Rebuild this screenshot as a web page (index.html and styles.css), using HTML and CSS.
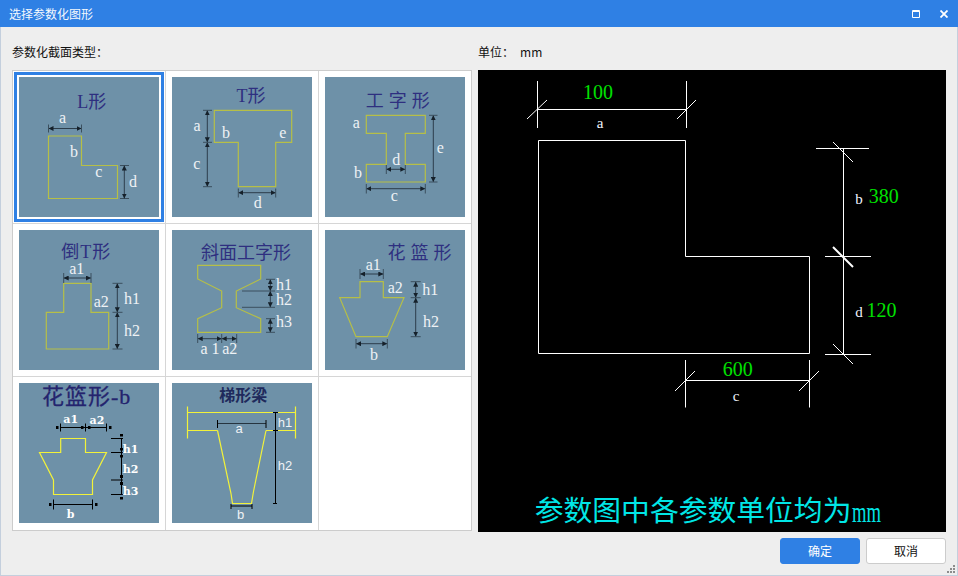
FILE: index.html
```html
<!DOCTYPE html>
<html lang="zh-CN">
<head>
<meta charset="utf-8">
<title>选择参数化图形</title>
<link rel="stylesheet" href="styles.css">
</head>
<body>
<div class="window">
  <header class="titlebar">
    <span class="title">选择参数化图形</span>
    <div class="win-btns">
      <svg class="win-icon" viewBox="0 0 8 8"><path class="ic" d="M.5 1.5h7v6h-7zM.5 .5h7v1h-7z"/></svg>
      <svg class="win-icon" viewBox="0 0 8 8"><path class="ic2" d="M.5 .5l7 7M7.5 .5l-7 7"/></svg>
    </div>
  </header>
  <main class="main">
    <div class="columns">
      <section class="col-left">
        <div class="col-label">参数化截面类型：</div>
        <div class="grid">
          <div class="cell selected">
            <svg class="thumb" viewBox="0 0 140 140">
              <defs>
                <marker id="ah" viewBox="0 0 6 6" refX="6" refY="3" markerWidth="5" markerHeight="5" markerUnits="userSpaceOnUse" orient="auto-start-reverse"><path class="head" d="M0 0L6 3L0 6Z"/></marker>
                <marker id="sq" viewBox="0 0 6 6" refX="-4" refY="3" markerWidth="3" markerHeight="3" markerUnits="userSpaceOnUse" orient="auto-start-reverse"><path class="head-k" d="M0 0H6V6H0Z"/></marker>
              </defs>
              <text class="ttl" x="72.7" y="31">L形</text>
              <path class="shape" d="M29.5 59H62.5V88.5H98.5V121.5H29.5Z"/>
              <line class="dim" x1="29.5" y1="51.5" x2="62.5" y2="51.5"/>
              <path class="tick" d="M29.5 47.5V55.5M62.5 47.5V55.5M101 88.5H110M101 121.5H110"/>
              <line class="dim" x1="105.3" y1="88.5" x2="105.3" y2="121.5"/>
              <text class="lbl" x="43.5" y="46">a</text>
              <text class="lbl" x="55" y="80">b</text>
              <text class="lbl" x="79.7" y="99.7">c</text>
              <text class="lbl" x="114" y="109.7">d</text>
            </svg>
          </div>
          <div class="cell">
            <svg class="thumb" viewBox="0 0 140 140">
              <text class="ttl" x="79" y="25">T形</text>
              <path class="shape" d="M42.3 33.3H119.7V65.3H103.7V109.7H66.3V65.3H42.3Z"/>
              <line class="dim" x1="35.3" y1="33.3" x2="35.3" y2="65.3"/>
              <line class="dim" x1="35.3" y1="65.3" x2="35.3" y2="109.7"/>
              <line class="dim" x1="66.3" y1="115.7" x2="103.7" y2="115.7"/>
              <path class="tick" d="M31 33.3H40M31 65.3H40M31 109.7H40M66.3 111.5V120.5M103.7 111.5V120.5"/>
              <text class="lbl" x="25" y="53.7">a</text>
              <text class="lbl" x="24.7" y="91.7">c</text>
              <text class="lbl" x="54" y="61.3">b</text>
              <text class="lbl" x="110.7" y="61.3">e</text>
              <text class="lbl" x="85.7" y="131.3">d</text>
            </svg>
          </div>
          <div class="cell">
            <svg class="thumb" viewBox="0 0 140 140">
              <text class="ttl ttl-wide" x="75.2" y="30.3">工字形</text>
              <path class="shape" d="M41.3 38.3H100.3V56.3H80.3V87.3H100.3V105H41.3V87.3H61.3V56.3H41.3Z"/>
              <line class="dim" x1="108.3" y1="38.3" x2="108.3" y2="105"/>
              <line class="dim" x1="61.3" y1="92.3" x2="80.3" y2="92.3"/>
              <line class="dim" x1="41.3" y1="111.7" x2="100.3" y2="111.7"/>
              <path class="tick" d="M104 38.3H112.5M104 105H112.5M61.3 88V97M80.3 88V97M41.3 107V116.5M100.3 107V116.5"/>
              <text class="lbl" x="31.3" y="50.7">a</text>
              <text class="lbl" x="33" y="101.3">b</text>
              <text class="lbl" x="71.3" y="88">d</text>
              <text class="lbl" x="115.3" y="75.7">e</text>
              <text class="lbl" x="69.3" y="124">c</text>
            </svg>
          </div>
          <div class="cell">
            <svg class="thumb" viewBox="0 0 140 140">
              <text class="ttl ttl-tee" x="67.3" y="27.5">倒T形</text>
              <path class="shape" d="M44.7 53.3H72V82.3H89.7V119H27.3V82.3H44.7Z"/>
              <line class="dim" x1="44.7" y1="48" x2="72" y2="48"/>
              <line class="dim" x1="98.3" y1="53.3" x2="98.3" y2="82.3"/>
              <line class="dim" x1="98.3" y1="82.3" x2="98.3" y2="119"/>
              <path class="tick" d="M44.7 43V53M72 43V53M93.5 53.3H103.5M93.5 82.3H103.5M93.5 119H103.5"/>
              <text class="lbl" x="57.7" y="44">a1</text>
              <text class="lbl" x="82.3" y="77">a2</text>
              <text class="lbl" x="113" y="73.7">h1</text>
              <text class="lbl" x="113" y="106">h2</text>
            </svg>
          </div>
          <div class="cell">
            <svg class="thumb" viewBox="0 0 140 140">
              <text class="ttl" x="74" y="28.7">斜面工字形</text>
              <path class="shape" d="M25.7 35.3H88.7V49L64.3 61V77.7L88.7 88.7V102.3H25.7V88.7L49.7 77.7V61L25.7 49Z"/>
              <line class="dim" x1="98.3" y1="49.3" x2="98.3" y2="61"/>
              <line class="dim" x1="98.3" y1="61" x2="98.3" y2="77.3"/>
              <line class="dim" x1="98.3" y1="88.7" x2="98.3" y2="102.3"/>
              <line class="dim" x1="25.7" y1="108.7" x2="49.7" y2="108.7"/>
              <line class="dim" x1="49.7" y1="108.7" x2="64.7" y2="108.7"/>
              <path class="tick" d="M94 49.3H103M70 61H103M70 77.3H103M94 88.7H103M94 102.3H103M25.7 104V113M49.7 104V113M64.7 104V113"/>
              <text class="lbl" x="112" y="59.7">h1</text>
              <text class="lbl" x="112" y="75.3">h2</text>
              <text class="lbl" x="112" y="97.3">h3</text>
              <text class="lbl" x="38" y="123.7">a 1</text>
              <text class="lbl" x="57.7" y="123.7">a2</text>
            </svg>
          </div>
          <div class="cell">
            <svg class="thumb" viewBox="0 0 140 140">
              <text class="ttl ttl-wide" x="97" y="28.7">花篮形</text>
              <path class="shape" d="M35 51.7H58.3V67.7H79L62.3 106.7H31L14.7 67.7H35Z"/>
              <line class="dim" x1="35" y1="44" x2="58.3" y2="44"/>
              <line class="dim" x1="90.7" y1="51.7" x2="90.7" y2="67.7"/>
              <line class="dim" x1="90.7" y1="67.7" x2="90.7" y2="106.7"/>
              <line class="dim" x1="31" y1="113.7" x2="62.3" y2="113.7"/>
              <path class="tick" d="M35 39V49M58.3 39V49M85.7 51.7H95.7M85.7 67.7H95.7M85.7 106.7H95.7M31 109V118.5M62.3 109V118.5"/>
              <text class="lbl" x="48.3" y="40.3">a1</text>
              <text class="lbl" x="70.3" y="63.3">a2</text>
              <text class="lbl" x="105.3" y="65.3">h1</text>
              <text class="lbl" x="106" y="97.3">h2</text>
              <text class="lbl" x="49" y="129.7">b</text>
            </svg>
          </div>
          <div class="cell">
            <svg class="thumb" viewBox="0 0 140 140">
              <text class="ttl ttl-big" x="67.7" y="21.3">花篮形-b</text>
              <path class="shape-y" d="M41.7 55.5H66.5V69.5H87.5L73.5 97V111.5H34.5V97L20.5 69.5H41.7Z"/>
              <line class="dim-k" x1="41.5" y1="44.5" x2="66.5" y2="44.5"/>
              <line class="dim-k" x1="66.5" y1="44.5" x2="87.5" y2="44.5"/>
              <line class="dim-k" x1="102.5" y1="55.5" x2="102.5" y2="69.5"/>
              <line class="dim-k" x1="102.5" y1="69.5" x2="102.5" y2="97"/>
              <line class="dim-k" x1="102.5" y1="97" x2="102.5" y2="111.5"/>
              <line class="dim-k" x1="34.5" y1="121.5" x2="73.5" y2="121.5"/>
              <path class="tick-k" d="M41.5 40.5V48.5M66.5 40.5V48.5M87.5 40.5V48.5M92 55.5H104M92 69.5H104M92 97H104M92 111.5H104M34.5 116.5V126.5M73.5 116.5V126.5"/>
              <text class="lbl-b" x="51.7" y="39.7">a1</text>
              <text class="lbl-b" x="78" y="40.7">a2</text>
              <text class="lbl-b" x="111.7" y="69.7">h1</text>
              <text class="lbl-b" x="111.7" y="90">h2</text>
              <text class="lbl-b" x="111.7" y="112">h3</text>
              <text class="lbl-b" x="51.7" y="134.7">b</text>
            </svg>
          </div>
          <div class="cell">
            <svg class="thumb" viewBox="0 0 140 140">
              <text class="ttl ttl-bold" x="71.3" y="18">梯形梁</text>
              <path class="shape-y" d="M15.5 29.5H123.5M15.5 47.5H45.5M94 47.5H123.5M15.5 23.5V55.5M123.5 23.5V55.5M45.5 47.5L59 110.5L60.5 120.5H79.5L81.5 108.5L94 47.5"/>
              <line class="thin" x1="45.5" y1="40.5" x2="94" y2="40.5"/>
              <line class="thin-k" x1="103.5" y1="29.5" x2="103.5" y2="120.5"/>
              <path class="thin-k" d="M45.5 37V45M94 37V45M59 121V126M80 121V126M59 123H80M101 29.5H106M101 47.5H106M101 120.5H105"/>
              <text class="lbl-s" x="67" y="50.3">a</text>
              <text class="lbl-s" x="113" y="44.3">h1</text>
              <text class="lbl-s" x="113" y="87">h2</text>
              <text class="lbl-s" x="68.7" y="136">b</text>
            </svg>
          </div>
          <div class="cell"></div>
        </div>
      </section>
      <section class="col-right">
        <div class="col-label">单位：<span class="unit">mm</span></div>
        <div class="cad">
          <svg class="cad-svg" viewBox="0 0 468 462">
            <path class="cad-line" d="M60.5 70.5H207.5V186.5H331.5V283.5H60.5Z"/>
            <path class="cad-line" d="M59.5 11V58M208.5 11V58M59.5 39.5H208.5M49 49L69 30M199 49L218 30"/>
            <path class="cad-line" d="M338 78.5H391M347 186.5H393M347 284.5H393M365.5 78.5V284.5M355 72L375 92M355 274L375 294"/>
            <path class="cad-thick" d="M355 177L375 197"/>
            <path class="cad-line" d="M207.5 290V337.5M331.5 290V337.5M207.5 310.5H331.5M197 321L217 301M321 321L341 301"/>
            <text class="cad-num" x="120" y="29.3">100</text>
            <text class="cad-num" x="259.7" y="306">600</text>
            <text class="cad-num start" x="390.7" y="133">380</text>
            <text class="cad-num start" x="388.5" y="247">120</text>
            <text class="cad-par" x="122" y="58">a</text>
            <text class="cad-par" x="258" y="331">c</text>
            <text class="cad-par" x="381" y="133.5">b</text>
            <text class="cad-par" x="381" y="246.7">d</text>
            <text class="cad-note" x="56.7" y="451">参数图中各参数单位均为</text>
            <text class="cad-mm" x="374" y="452" textLength="29" lengthAdjust="spacingAndGlyphs">mm</text>
          </svg>
        </div>
      </section>
    </div>
    <footer class="footer">
      <button class="btn primary">确定</button>
      <button class="btn">取消</button>
    </footer>
    <svg class="grip" viewBox="0 0 9 9"><path class="grip-dots" d="M6 0h2v2H6zM3 3h2v2H3zM6 3h2v2H6zM0 6h2v2H0zM3 6h2v2H3zM6 6h2v2H6z"/></svg>
  </main>
</div>
</body>
</html>
```

FILE: styles.css
```css
*, *::before, *::after { box-sizing: border-box; }
html, body { margin: 0; padding: 0; }
body {
  width: 958px;
  height: 576px;
  overflow: hidden;
  font-family: "Noto Sans CJK SC", "Noto Sans", sans-serif;
  font-size: 12px;
  color: #111;
  background: #eee;
}
.window { width: 958px; height: 576px; display: flex; flex-direction: column; }
.titlebar {
  height: 27px;
  flex: none;
  background: #2f80e4;
  color: #fff;
  display: flex;
  align-items: center;
  justify-content: space-between;
  padding: 0 10px 0 9px;
}
.title { font-size: 12px; line-height: 18px; opacity: .95; }
.win-btns { display: flex; gap: 20px; align-items: center; }
.win-icon { width: 8px; height: 8px; display: block; }
.ic { fill: none; stroke: #fff; stroke-width: 1; }
.ic2 { fill: none; stroke: #fff; stroke-width: 1.8; }

.main {
  position: relative;
  flex: 1;
  border: 1px solid #c4cfdd;
  border-top: 0;
  padding: 0 11px;
  display: flex;
  flex-direction: column;
}
.columns { display: flex; gap: 6px; }
.col-left { width: 460px; flex: none; }
.col-right { width: 468px; flex: none; }
.col-label { height: 43px; padding-top: 16px; line-height: 18px; font-size: 12px; color: #111; }
.unit { margin-left: 6px; }

.grid {
  width: 460px;
  height: 461px;
  border: 1px solid #ccc;
  background: #fff;
  display: grid;
  grid-template-columns: 153px 153px 152px;
  grid-template-rows: 153px 153px 153px;
}
.cell {
  position: relative;
  padding: 6px 0 0 6px;
  border-right: 1px solid #d6d6d6;
  border-bottom: 1px solid #d6d6d6;
}
.cell:nth-child(3n) { border-right: 0; }
.cell:nth-child(n+7) { border-bottom: 0; }
.selected::after {
  content: "";
  position: absolute;
  left: 1px;
  top: 1px;
  width: 150px;
  height: 150px;
  border: 3px solid #2f80e4;
}
.thumb { display: block; width: 140px; height: 140px; background: #6e91a8; }

.ttl {
  font-family: "Liberation Serif", "Noto Sans CJK SC", serif;
  font-size: 18px;
  fill: #2e2f80;
  text-anchor: middle;
}
.ttl-wide { letter-spacing: 5px; }
.ttl-tee { letter-spacing: 1px; }
.ttl-big { font-size: 22px; letter-spacing: 1px; fill: #24246e; stroke: #24246e; stroke-width: .3px; }
.ttl-bold { font-size: 16px; font-weight: 700; fill: #1f2a5c; }
.lbl {
  font-family: "Liberation Serif", serif;
  font-size: 16px;
  fill: #eef2f5;
  text-anchor: middle;
}
.lbl-s {
  font-family: "Liberation Sans", sans-serif;
  font-size: 13px;
  fill: #eef2f5;
  text-anchor: middle;
}
.lbl-b {
  font-family: "DejaVu Serif", serif;
  font-size: 11px;
  font-weight: 700;
  fill: #fff;
  text-anchor: middle;
}
.shape { fill: none; stroke: #b6bf47; stroke-width: 1.2; }
.shape-y { fill: none; stroke: #f2f23a; stroke-width: 1.2; }
.dim {
  stroke: #2c3d4b;
  stroke-width: 1;
  marker-start: url(#ah);
  marker-end: url(#ah);
}
.tick { fill: none; stroke: #3b4f5e; stroke-width: 1; }
.head { fill: #15202a; }
.dim-k {
  stroke: #000;
  stroke-width: 1;
  marker-start: url(#sq);
  marker-end: url(#sq);
}
.tick-k { fill: none; stroke: #000; stroke-width: 1; }
.head-k { fill: #000; }
.thin { stroke: #26343f; stroke-width: 1; }
.thin-k { fill: none; stroke: #000; stroke-width: 1; }

.cad { width: 468px; height: 462px; background: #000; }
.cad-svg { display: block; width: 468px; height: 462px; }
.cad-line { fill: none; stroke: #fff; stroke-width: 1; }
.cad-thick { fill: none; stroke: #fff; stroke-width: 2; }
.cad-num {
  font-family: "Liberation Serif", serif;
  font-size: 20px;
  fill: #00e000;
  text-anchor: middle;
}
.cad-num.start { text-anchor: start; }
.cad-par {
  font-family: "Liberation Serif", serif;
  font-size: 15px;
  fill: #f0f4ff;
  text-anchor: middle;
}
.cad-note { font-family: "Noto Sans CJK SC", sans-serif; font-size: 28.8px; fill: #00e6e6; }
.cad-mm { font-family: "Liberation Serif", serif; font-size: 30px; fill: #00e6e6; }

.footer { display: flex; justify-content: flex-end; gap: 6px; padding-top: 6px; }
.btn {
  width: 80px;
  height: 26px;
  padding: 0;
  border: 1px solid #ccc;
  border-radius: 3px;
  background: #fff;
  color: #111;
  font-family: inherit;
  font-size: 12px;
  line-height: 24px;
}
.btn.primary { background: #2f80e4; border-color: #2f80e4; color: #fff; }
.grip { position: absolute; right: 1px; bottom: 1px; width: 9px; height: 9px; display: block; }
.grip-dots { fill: #8c8c8c; }
```
